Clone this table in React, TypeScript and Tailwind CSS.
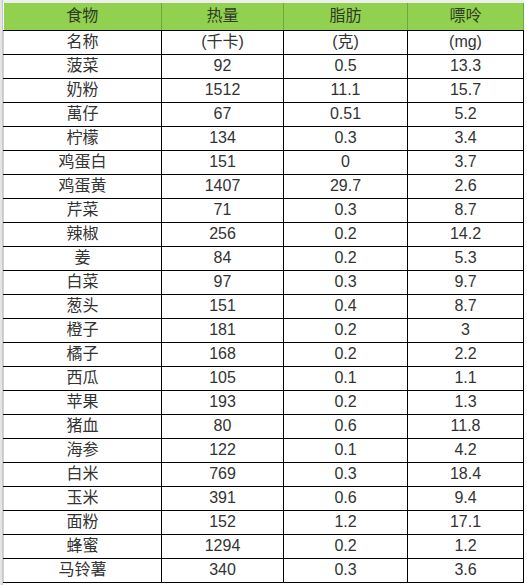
const rows: [string, string, string, string][] = [
  ['名称', '(千卡)', '(克)', '(mg)'],
  ['菠菜', '92', '0.5', '13.3'],
  ['奶粉', '1512', '11.1', '15.7'],
  ['萬仔', '67', '0.51', '5.2'],
  ['柠檬', '134', '0.3', '3.4'],
  ['鸡蛋白', '151', '0', '3.7'],
  ['鸡蛋黄', '1407', '29.7', '2.6'],
  ['芹菜', '71', '0.3', '8.7'],
  ['辣椒', '256', '0.2', '14.2'],
  ['姜', '84', '0.2', '5.3'],
  ['白菜', '97', '0.3', '9.7'],
  ['葱头', '151', '0.4', '8.7'],
  ['橙子', '181', '0.2', '3'],
  ['橘子', '168', '0.2', '2.2'],
  ['西瓜', '105', '0.1', '1.1'],
  ['苹果', '193', '0.2', '1.3'],
  ['猪血', '80', '0.6', '11.8'],
  ['海参', '122', '0.1', '4.2'],
  ['白米', '769', '0.3', '18.4'],
  ['玉米', '391', '0.6', '9.4'],
  ['面粉', '152', '1.2', '17.1'],
  ['蜂蜜', '1294', '0.2', '1.2'],
  ['马铃薯', '340', '0.3', '3.6'],
];

const headers = ['食物', '热量', '脂肪', '嘌呤'];
const widths = ['w-[158px]', 'w-[122px]', 'w-[124px]', 'w-[116px]'];

export default function App() {
  return (
    <div className="w-[527px] h-[585px] bg-white overflow-hidden font-['Liberation_Sans','Noto_Sans_CJK_SC',sans-serif] text-[16px] text-[#333]">
      <div className="flex h-full">
        {/* spreadsheet gutter */}
        <div className="w-[3px] bg-[#e4e4e4] border-r border-[#c8c8c8]" />
        <div className="flex flex-col">
          <div className="h-[3px] bg-[#eeeeee]" />
          <table className="border-collapse table-fixed">
            <thead>
              <tr className="h-[27px] bg-[#92d050]">
                {headers.map((h, i) => (
                  <th
                    key={h}
                    className={`${widths[i]} p-0 font-normal text-center text-[#2e3b25] border-b border-b-black ${
                      i < 3 ? 'border-r border-r-[#6fa83a]' : 'border-r border-r-[#6fa83a]'
                    } leading-none`}
                  >
                    {h}
                  </th>
                ))}
              </tr>
            </thead>
            <tbody>
              {rows.map((r, ri) => (
                <tr key={ri} className="h-[24px]">
                  {r.map((c, ci) => (
                    <td
                      key={ci}
                      className={`p-0 text-center leading-none border-b border-b-black ${
                        ci === 0 ? 'border-l border-l-[#d0d0d0]' : ''
                      } border-r border-r-black`}
                    >
                      {c}
                    </td>
                  ))}
                </tr>
              ))}
            </tbody>
          </table>
        </div>
      </div>
    </div>
  );
}
